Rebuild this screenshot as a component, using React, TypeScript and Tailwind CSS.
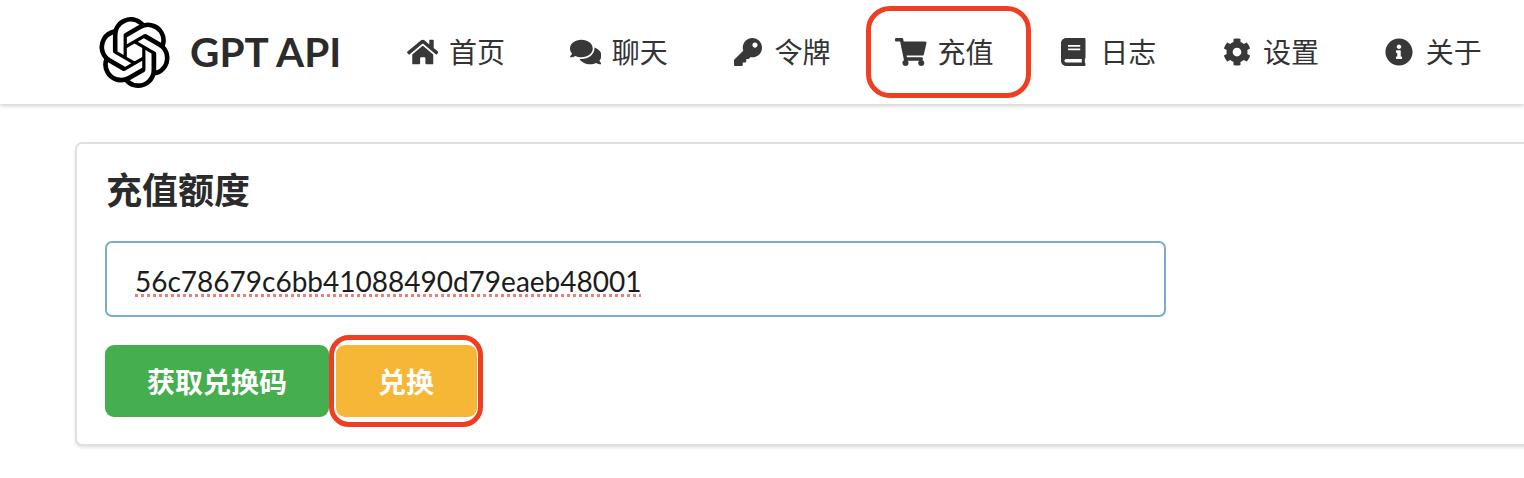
import { FaHome, FaComments, FaKey, FaShoppingCart, FaBook, FaCog, FaInfoCircle } from "react-icons/fa";
import { SiOpenai } from "react-icons/si";

const items = [
  { label: "首页", Icon: FaHome, size: "h-[28px] w-[31.5px] shrink-0 text-[#383838]" },
  { label: "聊天", Icon: FaComments, size: "h-[28px] w-[31.5px] shrink-0 text-[#383838]" },
  { label: "令牌", Icon: FaKey, size: "h-[28px] w-[28px] shrink-0 text-[#383838]" },
  { label: "充值", Icon: FaShoppingCart, size: "h-[28px] w-[31.5px] shrink-0 text-[#383838]", active: true },
  { label: "日志", Icon: FaBook, size: "h-[28px] w-[24.5px] shrink-0 text-[#383838]" },
  { label: "设置", Icon: FaCog, size: "h-[28px] w-[28px] shrink-0 text-[#383838]" },
  { label: "关于", Icon: FaInfoCircle, size: "h-[28px] w-[28px] shrink-0 text-[#383838]" },
];

export default function App() {
  return (
    <div className="h-[478px] w-[1524px] overflow-hidden bg-white text-[#333] font-['Lato','Noto_Sans_CJK_SC',sans-serif]">
      <nav className="flex h-[104px] items-center bg-white pl-[99px] shadow-[0_2px_4px_rgba(0,0,0,0.18)]">
        <div className="flex w-[278.6px] shrink-0 items-center gap-[20px]">
          <SiOpenai className="h-[71px] w-[71px] text-black" />
          <span className="text-[40.5px] font-bold leading-none text-[#2b2b2b]">GPT API</span>
        </div>
        <div className="flex">
          {items.map(({ label, Icon, size, active }) => (
            <div
              key={label}
              className={
                active
                  ? "-mr-[2.2px] flex h-[92px] w-[165px] shrink-0 items-center gap-[10px] rounded-[24px] border-[5px] border-[#ee3f22] pl-[23.4px] text-[28px]"
                  : "-mr-[2.2px] flex h-[92px] w-[165px] shrink-0 items-center gap-[10px] border-[5px] border-transparent pl-[23.4px] text-[28px]"
              }
            >
              <span className="flex w-[33px] shrink-0 justify-center">
                <Icon className={size} />
              </span>
              <span className="leading-none">{label}</span>
            </div>
          ))}
        </div>
      </nav>
      <div className="pl-[75px] pt-[38px]">
        <section className="h-[304px] w-[1500px] rounded-[7px] border-2 border-[#e0e0e0] bg-white pl-[28px] pt-[24px] shadow-[0_2px_3px_rgba(0,0,0,0.1)]">
          <h1 className="pl-[1px] text-[36px] font-bold leading-[44px] text-[#2b2b2b]">充值额度</h1>
          <div className="mt-[29px] flex h-[76px] w-[1061px] items-center rounded-[7px] border-2 border-[#7dabd0] pl-[28px] pt-[4px] text-[28px] text-[#1c1c1c]">
            <span className="underline decoration-dotted decoration-[#f47c72] decoration-[3px] underline-offset-[2px]">56c78679c6bb41088490d79eaeb48001</span>
          </div>
          <div className="mt-[28px] flex items-start">
            <button className="h-[72px] w-[224px] rounded-[9px] bg-[#45ae4e] pt-[2px] text-[28px] font-bold text-white">获取兑换码</button>
            <div className="-mt-[10px] rounded-[20px] border-[5px] border-[#ee3f22] py-[5px] pl-[1.5px] pr-[1px]">
              <button className="block h-[72px] w-[141px] rounded-[9px] bg-[#f6b636] pt-[2px] text-[28px] font-bold text-white">兑换</button>
            </div>
          </div>
        </section>
      </div>
    </div>
  );
}
